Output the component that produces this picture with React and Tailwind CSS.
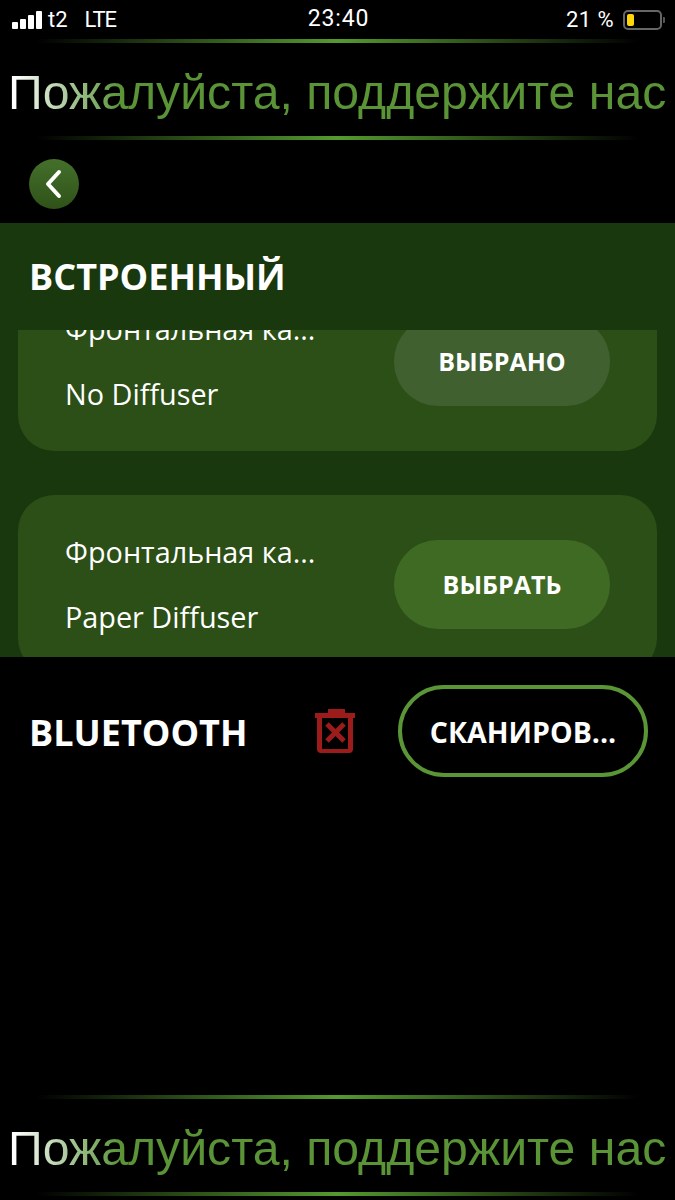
import React from "react";

const GlowLine = () => (
  <div className="h-[4px] mx-[36px] bg-linear-to-r from-transparent via-[#559a2e] to-transparent" />
);

const Banner = () => (
  <div className="flex flex-col">
    <GlowLine />
    <div className="h-[93px] flex items-center pl-[8px] pt-[4px] overflow-hidden">
      <span className="whitespace-nowrap text-[48.2px] leading-[56px] font-['Liberation_Sans',sans-serif] bg-linear-to-r from-white from-[1%] to-[#5a9436] to-[17%] bg-clip-text text-transparent">
        Пожалуйста, поддержите нас
      </span>
    </div>
    <GlowLine />
  </div>
);

const StatusBar = () => (
  <div className="h-[39px] flex items-center justify-between pl-[12px] pr-[10px] text-white font-['Roboto',sans-serif] text-[22px]">
    <div className="flex items-center w-[240px]">
      <div className="flex items-end gap-[2px] h-[18px] mr-[6px]">
        <div className="w-[6px] h-[7px] bg-white rounded-[1px]" />
        <div className="w-[6px] h-[10px] bg-white rounded-[1px]" />
        <div className="w-[6px] h-[14px] bg-white rounded-[1px]" />
        <div className="w-[6px] h-[18px] bg-white rounded-[1px]" />
      </div>
      <span>t2</span>
      <span className="ml-[17px] tracking-[-1px]">LTE</span>
    </div>
    <span className="text-[23px] tracking-[0.8px]">23:40</span>
    <div className="flex items-center justify-end w-[240px]">
      <span className="tracking-[0.4px]">21 %</span>
      <div className="ml-[9px] w-[39px] h-[20px] border-2 border-[#666] rounded-[5px] p-[2px]">
        <div className="w-[7px] h-full bg-[#ffd60a] rounded-[2px]" />
      </div>
      <div className="w-[2px] h-[6px] ml-[1px] bg-[#555] rounded-r-[1px]" />
    </div>
  </div>
);

const SensorCard = ({ line, action, selected }) => (
  <div className="h-[179px] shrink-0 rounded-[36px] bg-[#2c4e17] pl-[47px] pr-[47px] flex items-center justify-between">
    <div className="text-white text-[28.8px] leading-[38px] flex flex-col gap-[27px]">
      <span>Фронтальная ка...</span>
      <span>{line}</span>
    </div>
    <div
      className={`w-[216px] h-[89px] rounded-[44px] flex items-center justify-center text-white font-bold text-[25px] ${
        selected ? "bg-[#40602f]" : "bg-[#3f6a23]"
      }`}
    >
      {action}
    </div>
  </div>
);

const App = () => {
  return (
    <div className="w-[675px] h-[1200px] bg-black flex flex-col overflow-hidden font-['Open_Sans',sans-serif]">
      <StatusBar />
      <Banner />
      <div className="h-[83px] flex items-center pl-[29px] pt-[5px]">
        <div className="w-[50px] h-[50px] rounded-full bg-linear-to-b from-[#44702b] to-[#2f5219] flex items-center justify-center">
          <svg width="22" height="30" viewBox="0 0 22 30" fill="none" stroke="white" strokeWidth="4" strokeLinecap="round" strokeLinejoin="round">
            <path d="M16 3 L5 15 L16 27" />
          </svg>
        </div>
      </div>

      <div className="h-[434px] bg-[#1a380e] flex flex-col">
        <div className="h-[107px] shrink-0 flex items-center pl-[29px] text-white font-bold text-[36px]">
          ВСТРОЕННЫЙ
        </div>
        <div className="flex-1 overflow-hidden px-[18px]">
          <div className="-mt-[58px] flex flex-col gap-[44px]">
            <SensorCard line="No Diffuser" action="ВЫБРАНО" selected />
            <SensorCard line="Paper Diffuser" action="ВЫБРАТЬ" />
          </div>
        </div>
      </div>

      <div className="h-[148px] flex items-center pl-[29px] pr-[27px]">
        <span className="text-white font-bold text-[36px] w-[286px] pt-[3px]">BLUETOOTH</span>
        <svg width="40" height="45" viewBox="0 0 40 45" fill="#9c1c1c" className="shrink-0 mt-[1px]">
          <path d="M13 0 h17 v4 h10 v5 H0 V4 h13z" />
          <path d="M2 9 h5 v30 a1 1 0 0 0 1 1 h24 a1 1 0 0 0 1 -1 V9 h5 v31 a4 4 0 0 1 -4 4 H6 a4 4 0 0 1 -4 -4z" />
          <path d="M12 15 L29 32 M29 15 L12 32" stroke="#9c1c1c" strokeWidth="5" fill="none" />
        </svg>
        <div className="ml-[43px] w-[250px] h-[92px] rounded-[46px] border-[4px] border-[#5a9636] flex items-center justify-center text-white font-bold text-[28.5px] pt-[2px]">
          СКАНИРОВ...
        </div>
      </div>

      <div className="mt-auto pb-[4px]">
        <Banner />
      </div>
    </div>
  );
};

export default App;
